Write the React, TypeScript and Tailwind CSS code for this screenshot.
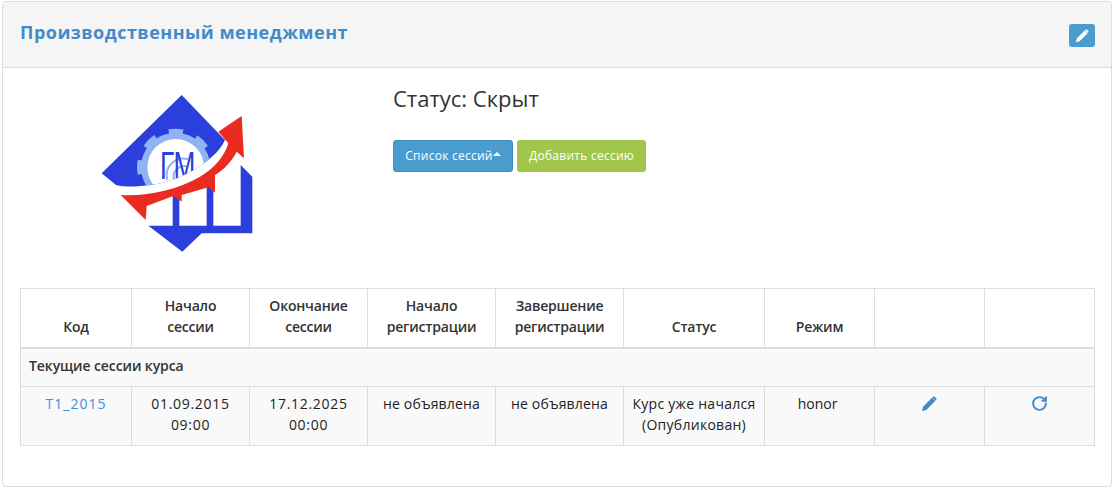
import { RotateCw } from "lucide-react";

const PencilGlyph = ({ className }: { className: string }) => (
  <svg viewBox="0 0 16 16" className={className} fill="currentColor">
    <path d="M1 15l1-4.2L11 1.8l3.2 3.2-9 9zM12 .8c.5-.5 1.2-.5 1.7 0l1.5 1.5c.5.5.5 1.200 0 1.700L14.500 4.700 11.300 1.500z" />
  </svg>
);

const Logo = () => (
  <svg viewBox="0 0 570 540" className="w-[190px] h-[180px] shrink-0 ml-[60px]">
    <defs>
      <clipPath id="diamond">
        <path d="M305 45L435 180C415 225 350 275 270 302C200 322 125 322 108 315L65 280z" />
      </clipPath>
    </defs>
    <path fill="#2a3fdc" d="M305 45L435 180C415 225 350 275 270 302C200 322 125 322 108 315L65 280z" />
    <g clipPath="url(#diamond)">
      <circle cx="287" cy="262" r="104" fill="#8fb4f5" />
      <circle cx="287" cy="262" r="108" fill="none" stroke="#8fb4f5" strokeWidth="16" strokeDasharray="42.4 42.4" strokeDashoffset="21.2" />
      <circle cx="287" cy="262" r="85" fill="#ffffff" />
      <path d="M262 300a50 50 0 0 1 62-62M282 300a32 32 0 0 1 40-40" fill="none" stroke="#8fb4f5" strokeWidth="6" />
      <text
        x="240"
        y="297"
        fill="#2a3fdc"
        fontFamily="Liberation Sans, sans-serif"
        fontSize="118"
        textLength="106"
        lengthAdjust="spacingAndGlyphs"
      >
        ГМ
      </text>
    </g>
    <path
      fill="#2a3fdc"
      d="M482 255L517 290V460H365L307 515L205 437H278V345H298V437H380V320H400V437H482z"
    />
    <path
      fill="#ea2b1f"
      d="M122 345C200 350 290 330 360 290C405 265 435 225 445 190L415 155L485 108L492 235L470 215C455 245 430 270 405 285V338L385 322L305 345V365L280 348L200 378L197 420z"
    />
  </svg>
);

const headers: string[][] = [
  ["Код"],
  ["Начало", "сессии"],
  ["Окончание", "сессии"],
  ["Начало", "регистрации"],
  ["Завершение", "регистрации"],
  ["Статус"],
  ["Режим"],
  [],
  [],
];

export default function App() {
  return (
    <div className="h-[489px] w-[1114px] bg-white pt-px pl-[2px] pr-[2px] text-sm leading-[21px] text-[#222] [font-family:'Open_Sans',sans-serif]">
      <div className="h-[486px] rounded-[4px] border border-[#ddd]">
        <div className="flex h-[66px] items-start justify-between rounded-t-[4px] border-b border-[#ddd] bg-[#f5f5f5] pl-[17px] pr-4">
          <h3 className="mt-[17px] text-[18px] leading-[27px] font-bold tracking-[0.48px] text-[#428bca]">Производственный менеджмент</h3>
          <button className="mt-[22px] flex h-[23px] w-[26px] items-center justify-center rounded-[3px] bg-[#4a9ccf] text-white">
            <PencilGlyph className="h-[14px] w-[14px]" />
          </button>
        </div>

        <div className="flex h-[220px] pl-[17px]">
          <div className="mt-[12px] w-[373px]">
            <Logo />
          </div>
          <div>
            <p className="mt-[15px] text-[22px] leading-[30px] text-[#333]">Статус: Скрыт</p>
            <div className="mt-[27px] flex gap-1">
              <button className="flex h-[32px] w-[120px] items-center justify-center rounded-[3px] border border-[#3d8dbd] bg-[#4a9ccf] pb-px text-[12px] tracking-[0.25px] text-white">
                Список сессий
                <span className="mb-[3px] border-x-4 border-b-4 border-x-transparent border-b-white" />
              </button>
              <button className="h-[32px] w-[129px] rounded-[3px] bg-[#a2c64b] pb-px text-[12px] tracking-[0.25px] text-white">Добавить сессию</button>
            </div>
          </div>
        </div>

        <div className="pl-[17px]">
          <table className="w-[1075px] table-fixed border-collapse border border-[#ddd] text-center">
            <colgroup>
              <col className="w-[111px]" />
              <col className="w-[118px]" />
              <col className="w-[118px]" />
              <col className="w-[128px]" />
              <col className="w-[128px]" />
              <col className="w-[141px]" />
              <col className="w-[110px]" />
              <col className="w-[110px]" />
              <col className="w-[110px]" />
            </colgroup>
            <thead>
              <tr>
                {headers.map((lines, i) => (
                  <th key={i} className="border border-b-2 border-[#ddd] px-2 pt-[6px] pb-[10px] align-bottom font-semibold tracking-[-0.2px] text-[#333]">
                    {lines.map((line) => (
                      <div key={line}>{line}</div>
                    ))}
                  </th>
                ))}
              </tr>
            </thead>
            <tbody className="bg-[#f9f9f9]">
              <tr>
                <td colSpan={9} className="border border-[#ddd] px-2 pt-[6px] pb-[10px] text-left font-semibold tracking-[-0.1px] text-[#333]">
                  Текущие сессии курса
                </td>
              </tr>
              <tr>
                <td className="border border-[#ddd] px-2 pt-[6px] pb-[10px] align-top tracking-[1px] text-[#3f8fd9]">T1_2015</td>
                <td className="border border-[#ddd] px-2 pt-[6px] pb-[10px] align-top tracking-[0.7px]">01.09.2015<br />09:00</td>
                <td className="border border-[#ddd] px-2 pt-[6px] pb-[10px] align-top tracking-[0.7px]">17.12.2025<br />00:00</td>
                <td className="border border-[#ddd] px-2 pt-[6px] pb-[10px] align-top tracking-[0.17px]">не объявлена</td>
                <td className="border border-[#ddd] px-2 pt-[6px] pb-[10px] align-top tracking-[0.17px]">не объявлена</td>
                <td className="border border-[#ddd] px-2 pt-[6px] pb-[10px] align-top tracking-[0.28px]">Курс уже начался<br />(Опубликован)</td>
                <td className="border border-[#ddd] pt-[6px] pr-[10px] pb-[10px] pl-[6px] align-top">honor</td>
                <td className="border border-[#ddd] px-2 pt-[6px] pb-[10px] align-top">
                  <PencilGlyph className="mx-auto mt-[3px] h-4 w-4 -translate-x-px text-[#428bca]" />
                </td>
                <td className="border border-[#ddd] px-2 pt-[6px] pb-[10px] align-top">
                  <RotateCw strokeWidth={2.8} className="mx-auto mt-[2px] h-[17px] w-[17px] text-[#428bca]" />
                </td>
              </tr>
            </tbody>
          </table>
        </div>
      </div>
    </div>
  );
}
